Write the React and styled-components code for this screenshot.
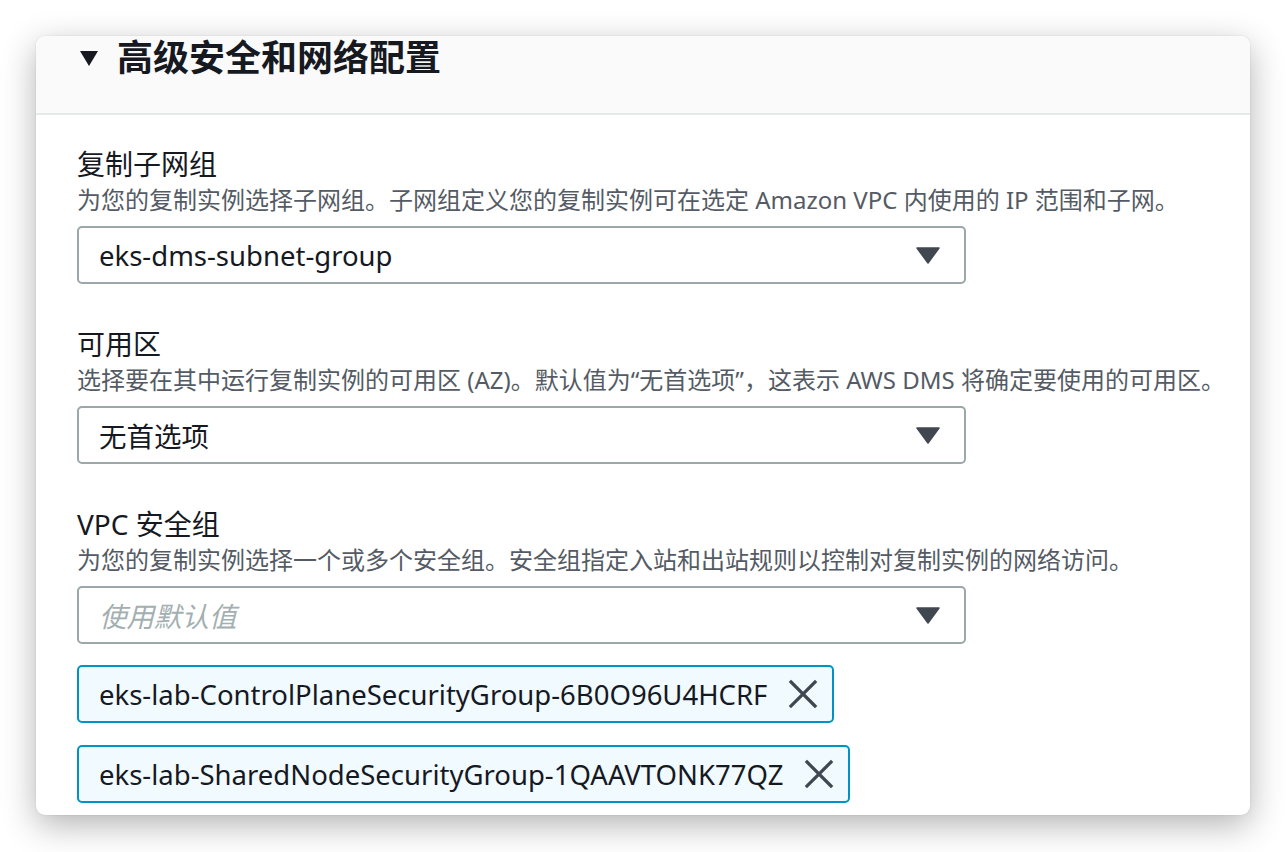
import React from "react"
import styled, { createGlobalStyle } from "styled-components"

const GlobalStyle = createGlobalStyle`
  html, body {
    margin: 0;
    padding: 0;
    background: #ffffff;
  }
  body {
    font-family: "Noto Sans", "Noto Sans CJK SC", sans-serif;
    color: #16191f;
  }
`

const Page = styled.div`
  padding: 36px 36px 37px 36px;
  width: 1214px;
`

const Card = styled.section`
  background: #ffffff;
  border-radius: 9px;
  box-shadow: 0 10px 34px rgba(0, 0, 0, 0.3), 0 0 2px rgba(0, 0, 0, 0.12);
  height: 779px;
`

const Header = styled.header`
  background: #fafafa;
  border-bottom: 2px solid #e5eaea;
  border-radius: 9px 9px 0 0;
  height: 77px;
  display: flex;
  align-items: flex-start;
  padding-left: 44px;
`

const Title = styled.h2`
  margin: 0;
  font-size: 36px;
  line-height: 44px;
  font-weight: 700;
  color: #16191f;
  display: flex;
  align-items: center;
  gap: 19px;
  font-family: "Noto Sans", "Noto Sans CJK SC", sans-serif;
`

const Body = styled.div`
  padding: 31px 20px 0 41px;
  display: flex;
  flex-direction: column;
`

const Field = styled.div`
  display: flex;
  flex-direction: column;
  margin-bottom: 42px;
`

const Label = styled.label`
  font-size: 28px;
  line-height: 36px;
  color: #16191f;
`

const Description = styled.p`
  margin: 0 0 8px;
  font-size: 24px;
  line-height: 36px;
  color: #545b64;
  white-space: nowrap;
`

const Select = styled.div`
  box-sizing: border-box;
  width: 889px;
  height: 58px;
  border: 2px solid #9ba7a8;
  border-radius: 5px;
  display: flex;
  align-items: center;
  justify-content: space-between;
  padding: 0 24px 0 20px;
  font-size: 27.5px;
  color: ${p => (p.$placeholder ? "#a3afb0" : "#16191f")};
  font-style: ${p => (p.$placeholder ? "italic" : "normal")};
`

const Tokens = styled.div`
  display: flex;
  flex-direction: column;
  align-items: flex-start;
  gap: 22px;
  margin-top: 21px;
`

const Token = styled.div`
  box-sizing: border-box;
  height: 58px;
  border: 2px solid #0093c6;
  border-radius: 5px;
  background: #f0faff;
  display: inline-flex;
  align-items: center;
  gap: 21px;
  padding: 0 14px 0 20px;
  font-size: 27.5px;
  color: #16191f;
`

const Caret = () => (
  <svg width="24" height="17" viewBox="0 0 24 17">
    <path d="M1 1 H23 L12 16 Z" fill="#414750" stroke="#414750" strokeWidth="1.5" strokeLinejoin="round" />
  </svg>
)

const TitleCaret = () => (
  <svg width="18" height="15" viewBox="0 0 18 15">
    <path d="M0 0 H18 L9 15 Z" fill="#16191f" />
  </svg>
)

const CloseIcon = () => (
  <svg width="30" height="30" viewBox="0 0 30 30">
    <path d="M3 3 L27 27 M27 3 L3 27" stroke="#414750" strokeWidth="3.2" strokeLinecap="square" />
  </svg>
)

const fields = [
  {
    label: "复制子网组",
    description: "为您的复制实例选择子网组。子网组定义您的复制实例可在选定 Amazon VPC 内使用的 IP 范围和子网。",
    value: "eks-dms-subnet-group",
  },
  {
    label: "可用区",
    description: "选择要在其中运行复制实例的可用区 (AZ)。默认值为“无首选项”，这表示 AWS DMS 将确定要使用的可用区。",
    value: "无首选项",
  },
]

const securityGroups = [
  "eks-lab-ControlPlaneSecurityGroup-6B0O96U4HCRF",
  "eks-lab-SharedNodeSecurityGroup-1QAAVTONK77QZ",
]

export default function App() {
  return (
    <>
      <GlobalStyle />
      <Page>
        <Card>
          <Header>
            <Title>
              <TitleCaret />
              高级安全和网络配置
            </Title>
          </Header>
          <Body>
            {fields.map(f => (
              <Field key={f.label}>
                <Label>{f.label}</Label>
                <Description>{f.description}</Description>
                <Select>
                  <span>{f.value}</span>
                  <Caret />
                </Select>
              </Field>
            ))}
            <Field>
              <Label>VPC 安全组</Label>
              <Description>为您的复制实例选择一个或多个安全组。安全组指定入站和出站规则以控制对复制实例的网络访问。</Description>
              <Select $placeholder>
                <span>使用默认值</span>
                <Caret />
              </Select>
              <Tokens>
                {securityGroups.map(g => (
                  <Token key={g}>
                    <span>{g}</span>
                    <CloseIcon />
                  </Token>
                ))}
              </Tokens>
            </Field>
          </Body>
        </Card>
      </Page>
    </>
  )
}
